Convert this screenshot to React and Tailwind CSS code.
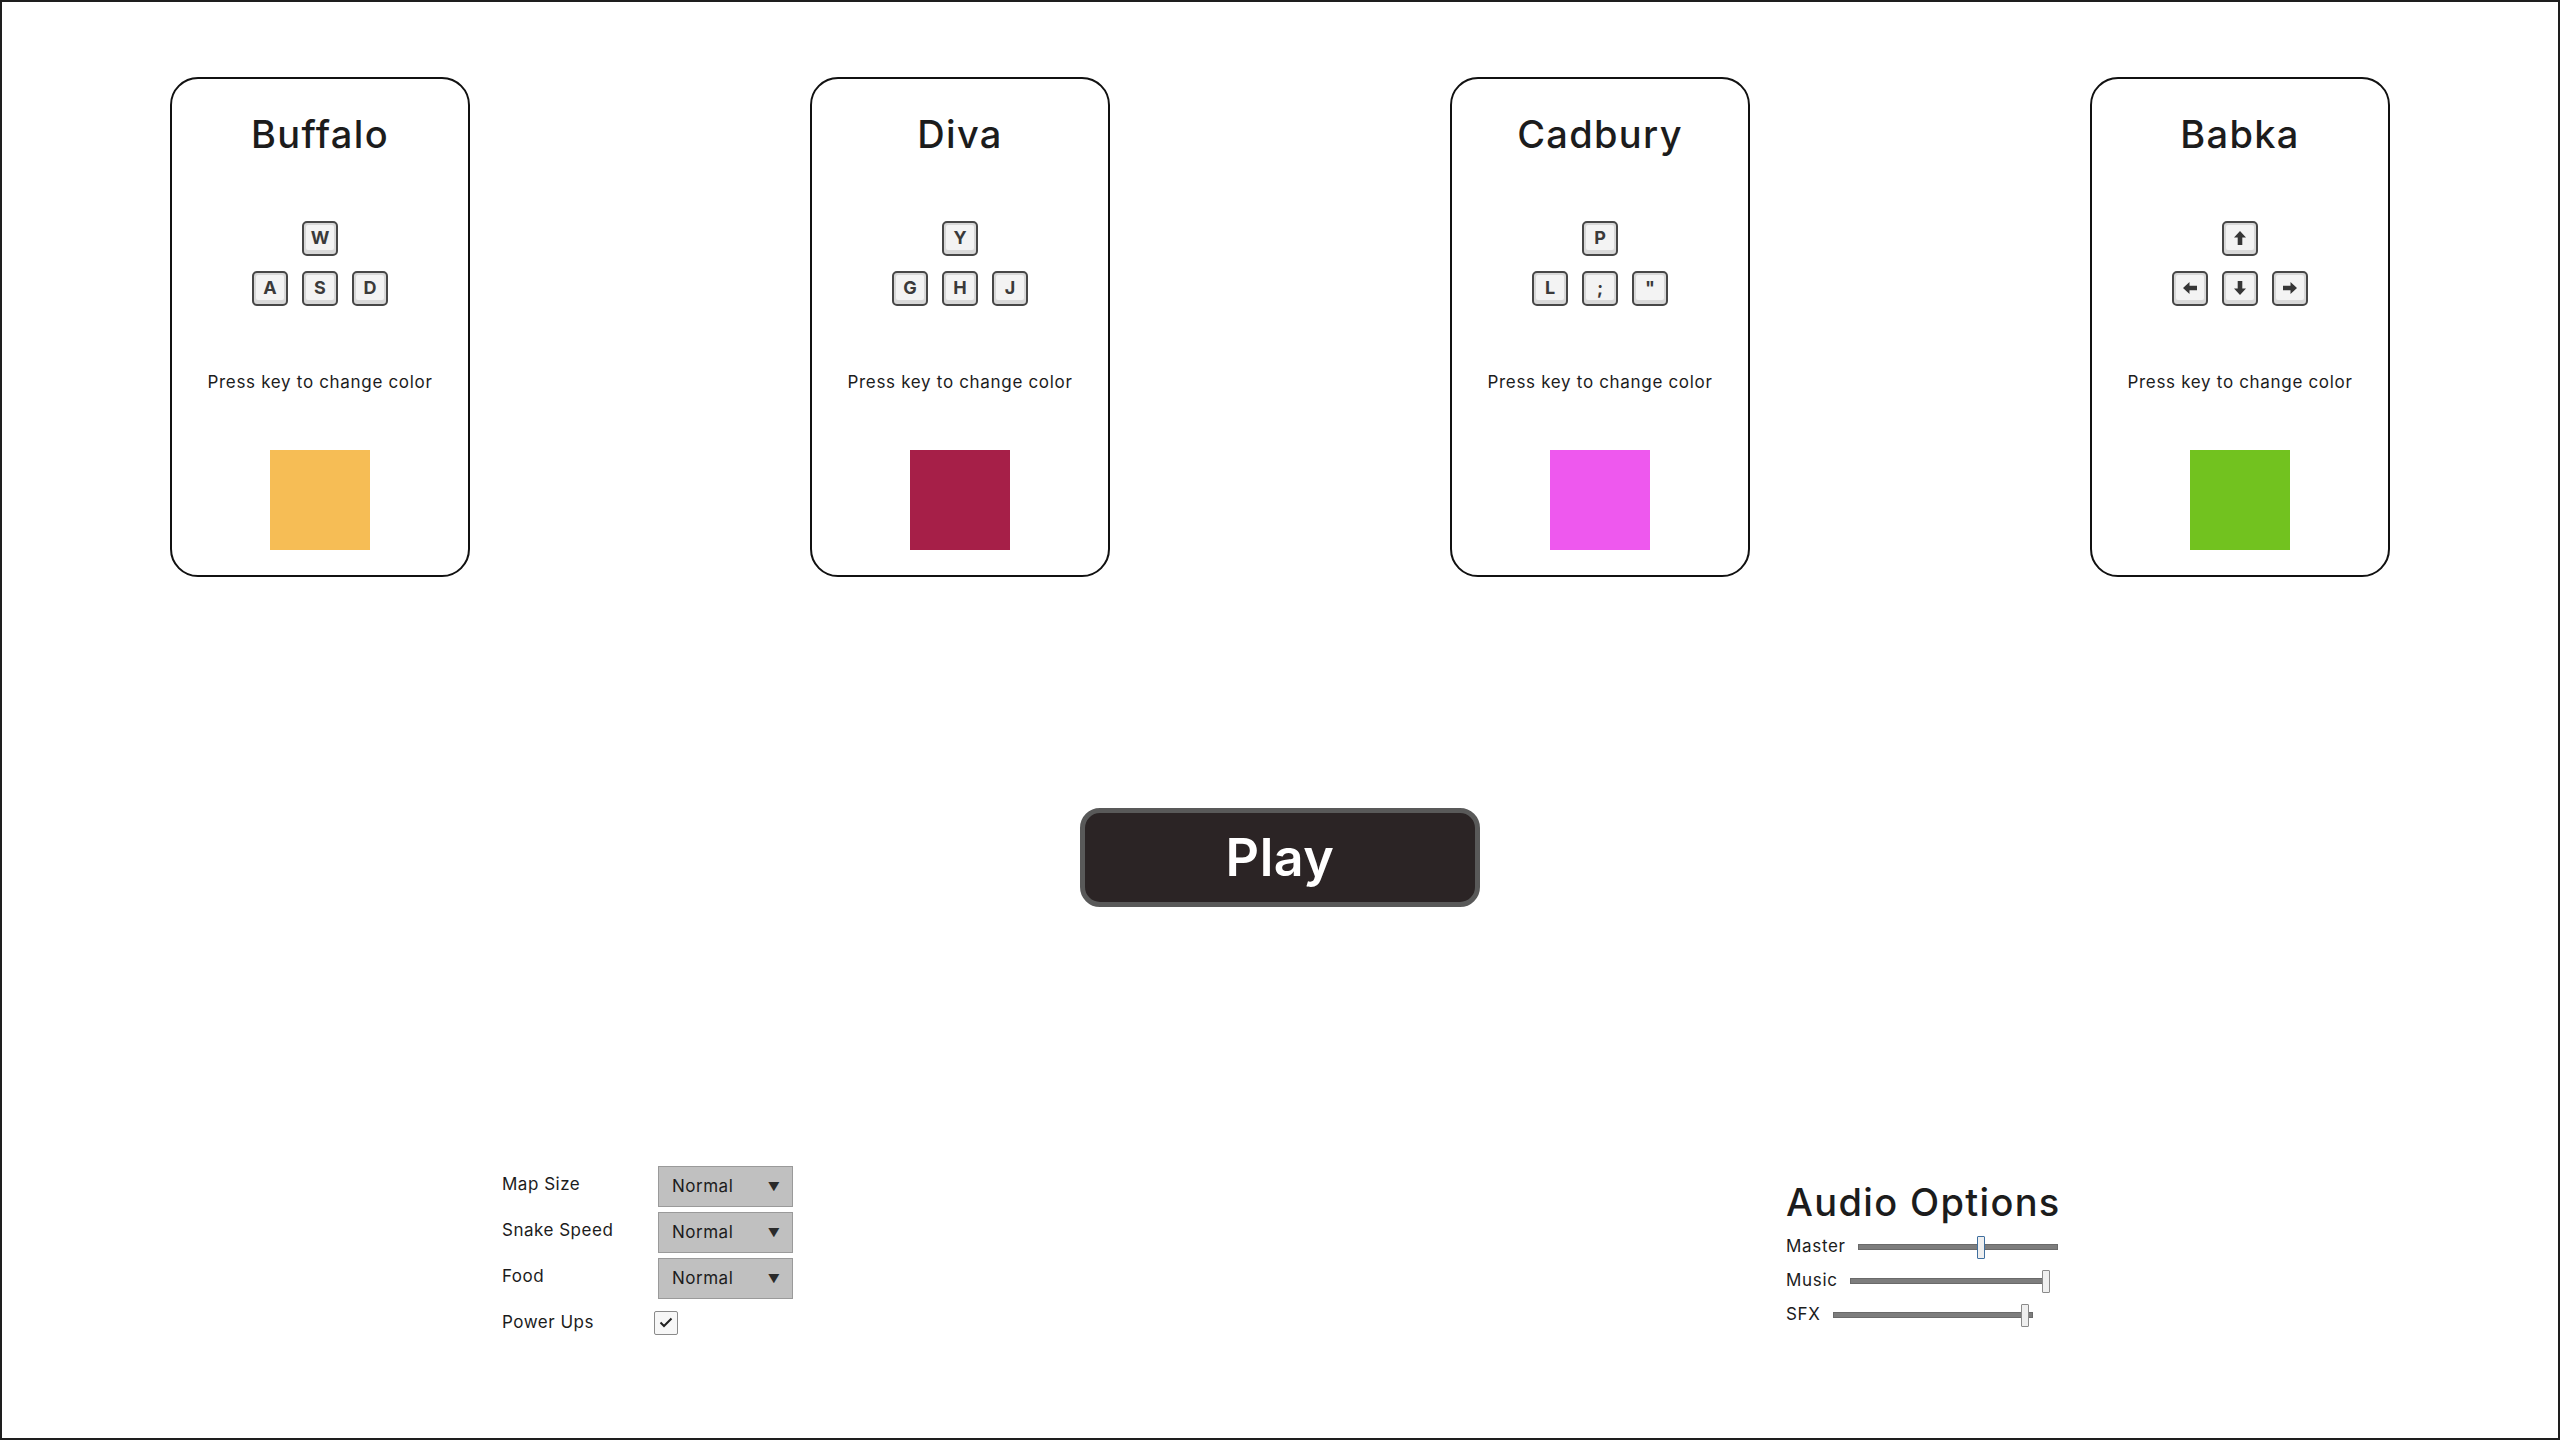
import React from 'react'

const players = [
  { name: 'Buffalo', color: 'bg-[#f6bd55]', keys: ['W', 'A', 'S', 'D'] },
  { name: 'Diva', color: 'bg-[#a61f48]', keys: ['Y', 'G', 'H', 'J'] },
  { name: 'Cadbury', color: 'bg-[#ee58ee]', keys: ['P', 'L', ';', '"'] },
  { name: 'Babka', color: 'bg-[#72c21f]', keys: ['up', 'left', 'down', 'right'] },
]

const arrowRotation = {
  up: 'rotate-0',
  right: 'rotate-90',
  down: 'rotate-180',
  left: '-rotate-90',
}

function Arrow({ dir }) {
  return (
    <svg width="12" height="14" viewBox="0 0 12 14" className={arrowRotation[dir]}>
      <path d="M6 0 L12 6.5 H8.3 V14 H3.7 V6.5 H0 Z" fill="#363636" />
    </svg>
  )
}

function Key({ label }) {
  const isArrow = label in arrowRotation
  return (
    <div className="w-[36px] h-[35px] rounded-[5px] border-[2.5px] border-[#474747] bg-[#d8d8d8] p-[2px] pb-[4px]">
      <div className="w-full h-full rounded-[2px] bg-[#f3f3f3] flex items-center justify-center text-[18px] font-bold text-[#3a3a3a] leading-none">
        {isArrow ? <Arrow dir={label} /> : label}
      </div>
    </div>
  )
}

function PlayerCard({ player }) {
  const [top, ...bottom] = player.keys
  return (
    <div className="w-[300px] h-[500px] border-2 border-[#111] rounded-[28px] flex flex-col items-center pt-[32px]">
      <h2 className="text-[38px] leading-[46px] font-medium text-[#1c1c1c] tracking-[0.035em]">{player.name}</h2>
      <div className="mt-[64px] flex flex-col items-center gap-[15px]">
        <Key label={top} />
        <div className="flex gap-[14px]">
          {bottom.map((k) => (
            <Key key={k} label={k} />
          ))}
        </div>
      </div>
      <p className="mt-[66px] text-[17px] leading-[20px] text-[#1c1c1c] tracking-[0.04em]">Press key to change color</p>
      <div className={`mt-[58px] w-[100px] h-[100px] ${player.color}`}></div>
    </div>
  )
}

function Select({ value }) {
  return (
    <div className="w-[135px] h-[41px] bg-[#c0c0c0] border border-[#9a9a9a] flex items-center justify-between pl-[13px] pr-[12px]">
      <span className="text-[17px] text-[#1c1c1c] tracking-[0.03em]">{value}</span>
      <span className="text-[12px] text-[#2a2a2a]">▼</span>
    </div>
  )
}

function Slider({ label, value, focused }) {
  return (
    <div className="h-[34px] flex items-center gap-[12px]">
      <span className="text-[17px] text-[#1c1c1c] tracking-[0.04em]">{label}</span>
      <div className="relative w-[200px] h-[23px] flex items-center">
        <div className="w-full h-[6px] bg-[#7d7d7d] border border-[#6a6a6a]"></div>
        <div
          className={`absolute top-0 w-[8px] h-[23px] bg-[#efefef] border rounded-[1px] ${focused ? 'border-[#3f6f9f]' : 'border-[#8a8a8a]'}`}
          style={{ left: `${value * 192}px` }}
        ></div>
      </div>
    </div>
  )
}

export default function App() {
  return (
    <div className="w-[2560px] h-[1440px] border-2 border-[#1e1e1e] bg-white font-['Inter',sans-serif] flex flex-col overflow-hidden">
      {/* Player cards */}
      <div className="mt-[75px] flex gap-[340px] pl-[168px]">
        {players.map((p) => (
          <PlayerCard key={p.name} player={p} />
        ))}
      </div>

      {/* Play button */}
      <div className="mt-[231px] flex justify-center">
        <button className="w-[400px] h-[99px] rounded-[20px] border-[5px] border-[#595959] bg-[#2b2425] text-white text-[52px] font-semibold tracking-[0.01em]">
          Play
        </button>
      </div>

      {/* Options */}
      <div className="mt-[259px] flex items-start pl-[500px]">
        <div className="flex flex-col">
          {[
            ['Map Size', 'Normal'],
            ['Snake Speed', 'Normal'],
            ['Food', 'Normal'],
          ].map(([label, value]) => (
            <div key={label} className="flex items-center mb-[5px]">
              <span className="w-[156px] text-[17px] text-[#1c1c1c] tracking-[0.03em] -mt-[4px]">{label}</span>
              <Select value={value} />
            </div>
          ))}
          <div className="flex items-center mt-[6px]">
            <span className="w-[152px] text-[17px] text-[#1c1c1c] tracking-[0.03em]">Power Ups</span>
            <div className="w-[24px] h-[24px] bg-[#f7f7f7] border border-[#8a8a8a] rounded-[2px] flex items-center justify-center">
              <svg width="14" height="11" viewBox="0 0 14 11">
                <path d="M1.5 5.5 L5 9 L12.5 1.5" fill="none" stroke="#222" strokeWidth="2" />
              </svg>
            </div>
          </div>
        </div>

        <div className="ml-[993px] mt-[13px] flex flex-col">
          <h3 className="text-[38px] leading-[46px] font-medium text-[#1c1c1c] tracking-[0.035em]">Audio Options</h3>
          <div className="mt-[5px] flex flex-col">
            <Slider label="Master" value={0.62} focused />
            <Slider label="Music" value={1} />
            <Slider label="SFX" value={0.98} />
          </div>
        </div>
      </div>
    </div>
  )
}
